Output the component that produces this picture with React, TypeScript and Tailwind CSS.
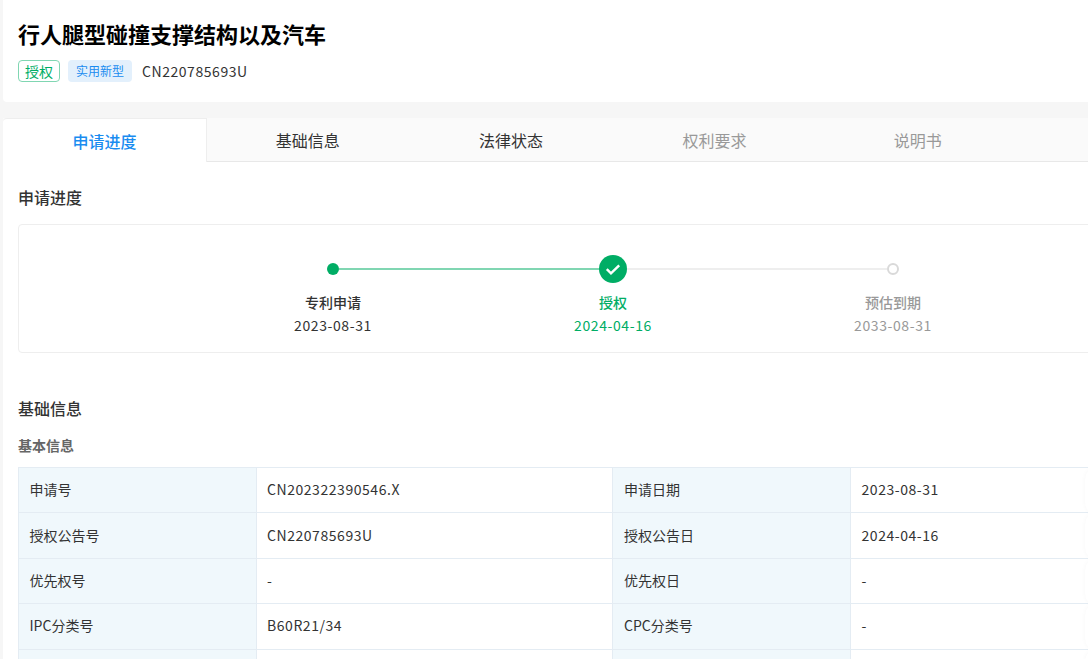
const fontStack = "font-['Noto_Sans_CJK_SC','Noto_Sans',sans-serif]";

const tabs = [
  { label: "申请进度", tone: "active" },
  { label: "基础信息", tone: "normal" },
  { label: "法律状态", tone: "normal" },
  { label: "权利要求", tone: "muted" },
  { label: "说明书", tone: "muted" },
];

const rows = [
  ["申请号", "CN202322390546.X", "申请日期", "2023-08-31"],
  ["授权公告号", "CN220785693U", "授权公告日", "2024-04-16"],
  ["优先权号", "-", "优先权日", "-"],
  ["IPC分类号", "B60R21/34", "CPC分类号", "-"],
  ["", "", "", ""],
];

// faint repeated account mark over the whole page
const marks: { x: number; y: number }[] = [];
for (let i = -3; i < 8; i++) {
  for (let j = -2; j < 14; j++) {
    const x = 692 + (i - 2) * 220 + j * 59;
    const y = 32 + (i - 2) * 8 + j * 52;
    if (x > -80 && x < 1170 && y > -60 && y < 720) marks.push({ x, y });
  }
}

function Watermark() {
  return (
    <>
      {marks.map((m) => (
        <span
          key={`${m.x}-${m.y}`}
          aria-hidden="true"
          className="pointer-events-none absolute -translate-x-1/2 -translate-y-1/2 -rotate-[42deg] text-sm tracking-[7px] whitespace-nowrap text-black/[0.022]"
          style={{ left: m.x, top: m.y }}
        >
          EEV8XKB
        </span>
      ))}
    </>
  );
}

function Tabs() {
  return (
    <div className="flex h-11 border-b border-[#e8e8e8] bg-[#fafafa]">
      {tabs.map((tab) => (
        <div
          key={tab.label}
          className={
            tab.tone === "active"
              ? "flex h-11 w-[204px] shrink-0 items-center justify-center rounded-tl-sm border-t border-r border-[#eeeeee] bg-white text-base font-medium text-[#1a8cf0]"
              : tab.tone === "muted"
                ? "flex h-[43px] w-[203.4px] shrink-0 items-center justify-center pr-0.5 text-base text-[#999999]"
                : "flex h-[43px] w-[203.4px] shrink-0 items-center justify-center pr-0.5 text-base text-[#333333]"
          }
        >
          {tab.label}
        </div>
      ))}
    </div>
  );
}

function Stepper() {
  return (
    <div className="mt-[15px] flex h-[129px] w-[1190px] justify-center rounded-sm border border-[#eeeeee] pt-[30px]">
      <div className="flex w-[280px] flex-col items-center">
        <div className="flex h-7 w-full items-center">
          <div className="flex-1" />
          <div className="h-3 w-3 rounded-full bg-[#00ad65]" />
          <div className="h-0.5 flex-1 bg-[#80d6b2]" />
        </div>
        <div className="mt-[9px] text-sm leading-5 font-medium text-[#333333]">专利申请</div>
        <div className="mt-[3px] text-sm leading-5 tracking-[0.6px] text-[#333333]">2023-08-31</div>
      </div>
      <div className="flex w-[280px] flex-col items-center">
        <div className="flex h-7 w-full items-center">
          <div className="h-0.5 flex-1 bg-[#80d6b2]" />
          <div className="flex h-7 w-7 items-center justify-center rounded-full bg-[#00ad65]">
            <svg width="18" height="18" viewBox="0 0 16 16" fill="none">
              <path d="M2.5 8.2L6.2 11.8L13.5 4.8" stroke="#ffffff" strokeWidth="2.2" />
            </svg>
          </div>
          <div className="h-0.5 flex-1 bg-[#eeeeee]" />
        </div>
        <div className="mt-[9px] text-sm leading-5 font-medium text-[#00ad65]">授权</div>
        <div className="mt-[3px] text-sm leading-5 tracking-[0.6px] text-[#00ad65]">2024-04-16</div>
      </div>
      <div className="flex w-[280px] flex-col items-center">
        <div className="flex h-7 w-full items-center">
          <div className="h-0.5 flex-1 bg-[#eeeeee]" />
          <div className="h-3 w-3 rounded-full border-2 border-[#d9d9d9] bg-white" />
          <div className="flex-1" />
        </div>
        <div className="mt-[9px] text-sm leading-5 font-medium text-[#999999]">预估到期</div>
        <div className="mt-[3px] text-sm leading-5 tracking-[0.6px] text-[#999999]">2033-08-31</div>
      </div>
    </div>
  );
}

function InfoTable() {
  return (
    <div className="mt-[12px] w-[1190px] border-t border-l border-[#e4ecf3]">
      {rows.map((row, i) => (
        <div key={i} className="relative grid h-[45.4px] grid-cols-[238px_356px_238px_356px] border-b border-[#e4ecf3] text-sm text-[#333333]">
          <div className="flex items-center border-r border-[#e4ecf3] bg-[#f0f8fc] pb-0.5 pl-[10.5px]">{row[0]}</div>
          <div className="flex items-center border-r border-[#e4ecf3] pb-0.5 pl-[10px] tracking-[0.55px]">{row[1]}</div>
          <div className="flex items-center border-r border-[#e4ecf3] bg-[#f0f8fc] pb-0.5 pl-[11px]">{row[2]}</div>
          <div className="flex items-center pb-0.5 pl-[10.5px] tracking-[0.55px]">{row[3]}</div>
          <div className="absolute top-[-2px] left-[1066px] h-[50px] w-5 rounded-l-[14px] bg-white shadow-[0_0_5px_rgba(0,0,0,0.03)]" />
        </div>
      ))}
    </div>
  );
}

export default function App() {
  return (
    <div className={`relative h-[659px] w-[1088px] overflow-hidden bg-[#f6f6f6] pl-[3px] ${fontStack}`}>
      <div className="w-[1240px]">
        <div className="h-[102px] rounded-bl-sm bg-white pt-[17px] pl-[15px]">
          <h1 className="text-[22px] leading-8 font-bold text-black">行人腿型碰撞支撑结构以及汽车</h1>
          <div className="mt-[11px] flex items-center">
            <span className="flex h-[22px] w-[42px] items-center justify-center rounded-sm border border-[#80d6b2] text-sm text-[#00ad65]">授权</span>
            <span className="ml-2 flex h-[22px] w-16 items-center justify-center rounded-sm bg-[#e3f0fc] text-xs text-[#1a8cf0]">实用新型</span>
            <span className="ml-2.5 text-sm tracking-[0.55px] text-[#333333]">CN220785693U</span>
          </div>
        </div>
        <div className="mt-4">
          <Tabs />
        </div>
        <div className="h-[497px] bg-white pl-[15px]">
          <h2 className="pt-[23px] text-base leading-6 font-medium text-[#333333]">申请进度</h2>
          <Stepper />
          <h2 className="mt-[43px] text-base leading-6 font-medium text-[#333333]">基础信息</h2>
          <h3 className="mt-[15px] text-sm leading-5 font-bold text-[#666666]">基本信息</h3>
          <InfoTable />
        </div>
      </div>
      <Watermark />
    </div>
  );
}
